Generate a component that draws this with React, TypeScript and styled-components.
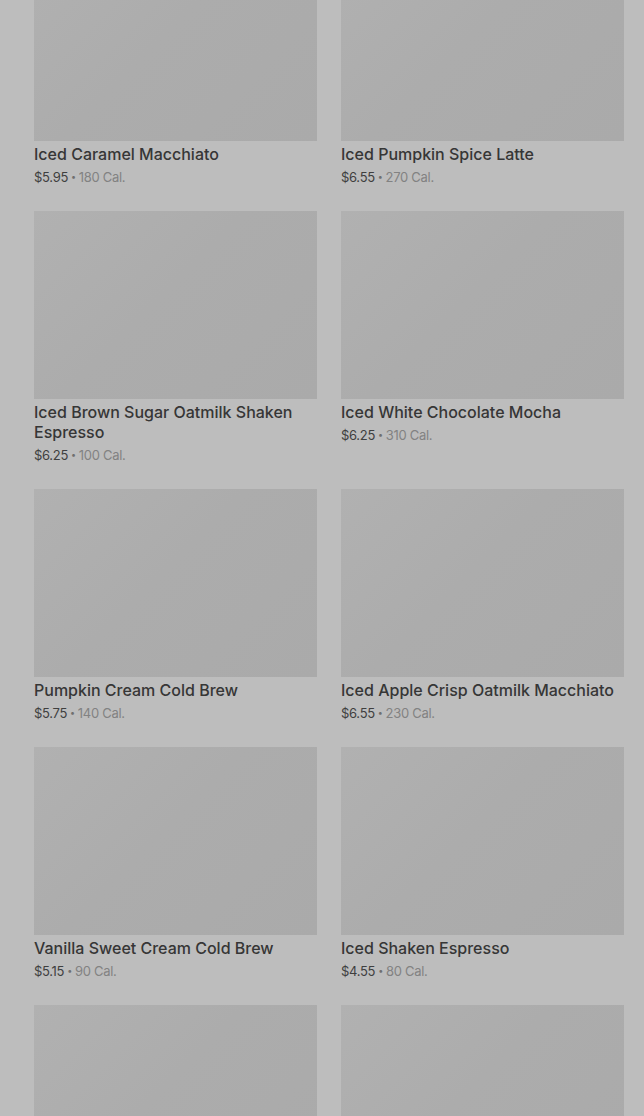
import styled, { createGlobalStyle } from "styled-components"

const GlobalStyle = createGlobalStyle`
    html, body {
        margin: 0;
        padding: 0;
        background: #bdbdbd;
        overflow: hidden;
    }
    body {
        font-family: Inter, "Noto Sans", "Liberation Sans", sans-serif;
    }
`

const drinks = [
    { name: "Iced Caramel Macchiato", price: "$5.95", cal: 180 },
    { name: "Iced Pumpkin Spice Latte", price: "$6.55", cal: 270 },
    { name: "Iced Brown Sugar Oatmilk Shaken Espresso", price: "$6.25", cal: 100 },
    { name: "Iced White Chocolate Mocha", price: "$6.25", cal: 310 },
    { name: "Pumpkin Cream Cold Brew", price: "$5.75", cal: 140 },
    { name: "Iced Apple Crisp Oatmilk Macchiato", price: "$6.55", cal: 230 },
    { name: "Vanilla Sweet Cream Cold Brew", price: "$5.15", cal: 90 },
    { name: "Iced Shaken Espresso", price: "$4.55", cal: 80 },
]

const Page = styled.div`
    height: 1116px;
    overflow: hidden;
    background: #bdbdbd;
`

const Grid = styled.div`
    display: grid;
    grid-template-columns: 283px 283px;
    column-gap: 24px;
    row-gap: 25px;
    padding: 0 20px 0 34px;
    margin-top: -47px;
`

const Card = styled.div`
    display: flex;
    flex-direction: column;
`

const Photo = styled.div`
    height: 188px;
    background: linear-gradient(135deg, #b1b1b1 0%, #acacac 45%, #aaaaaa 100%);
    margin-bottom: 3px;
`

const Title = styled.div`
    font-size: 16px;
    line-height: 20px;
    font-weight: 500;
    color: #363636;
    margin-bottom: 4px;
`

const Meta = styled.div`
    font-size: 13px;
    line-height: 18px;
    color: #3f3f3f;
    letter-spacing: -0.3px;
    display: flex;
    align-items: center;
    gap: 3px;
`

const Dot = styled.span`
    color: #6f6f6f;
    font-size: 9px;
`

const Cal = styled.span`
    color: #828282;
`

export default function App() {
    return (
        <Page>
            <GlobalStyle />
            <Grid>
                {drinks.map(d => (
                    <Card key={d.name}>
                        <Photo />
                        <Title>{d.name}</Title>
                        <Meta>
                            {d.price}
                            <Dot>•</Dot>
                            <Cal>{d.cal} Cal.</Cal>
                        </Meta>
                    </Card>
                ))}
                {/* next row is below the fold, only the photos show */}
                <Card><Photo /></Card>
                <Card><Photo /></Card>
            </Grid>
        </Page>
    )
}
